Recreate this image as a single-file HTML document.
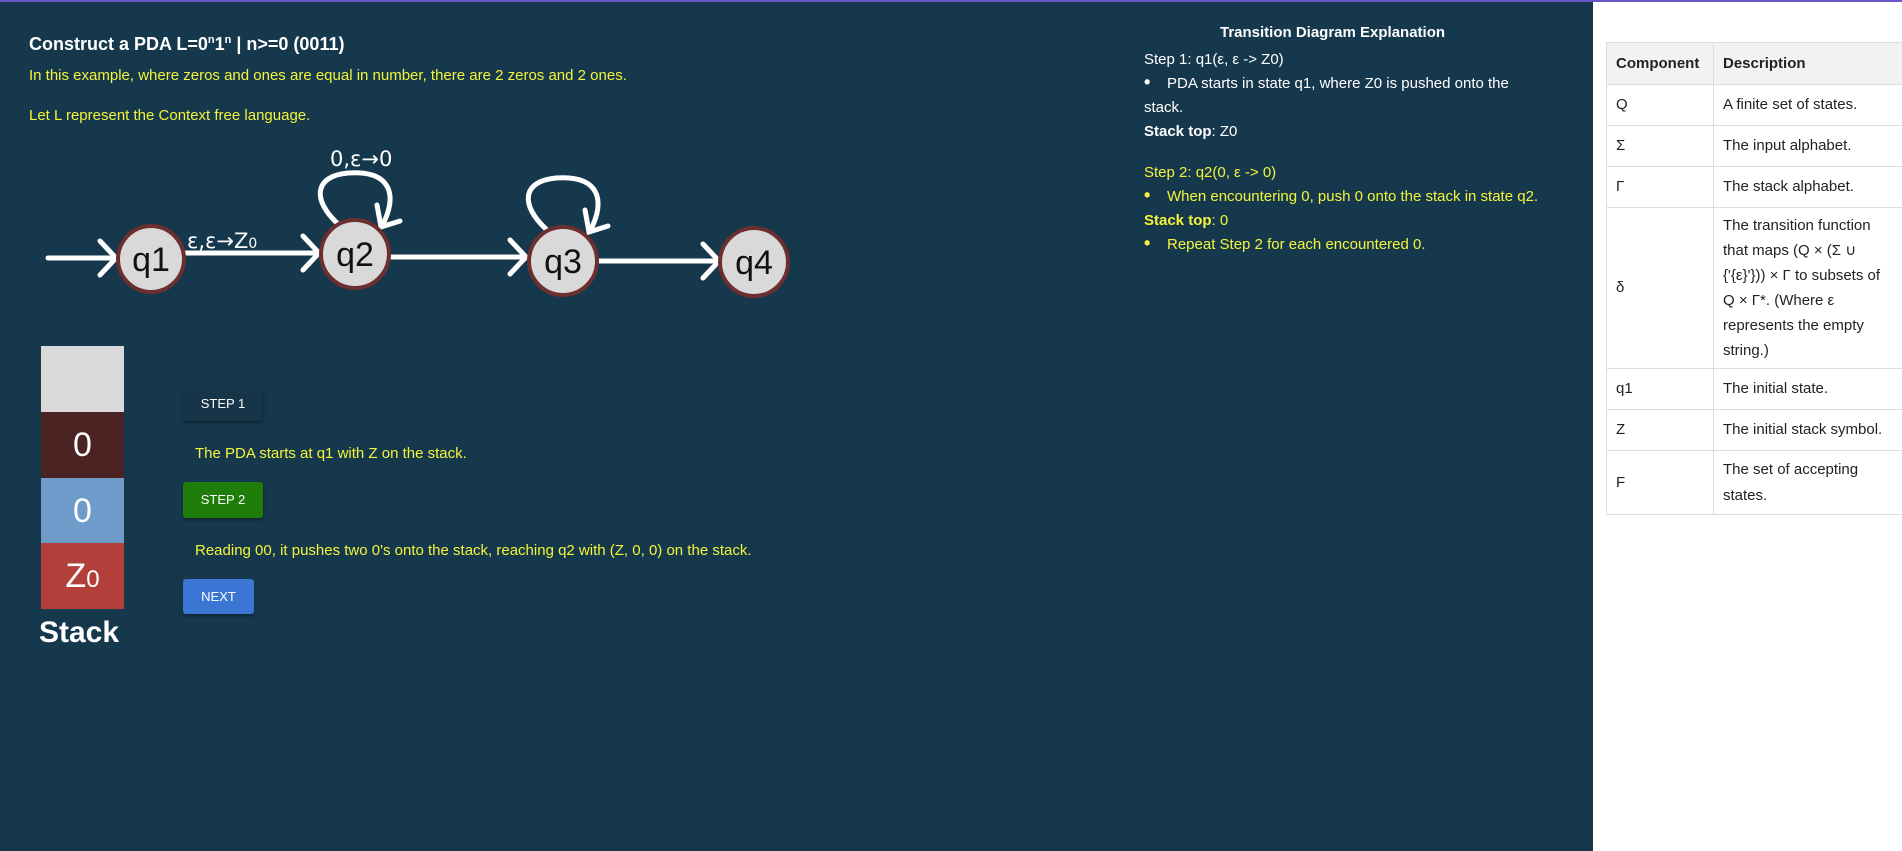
<!DOCTYPE html>
<html><head><meta charset="utf-8"><style>
*{margin:0;padding:0;box-sizing:border-box}
body{width:1902px;height:851px;overflow:hidden;background:#fff;font-family:"Liberation Sans",sans-serif;position:relative}
#dark{position:absolute;left:0;top:0;width:1593px;height:851px;background:#16384c}
#bar{position:absolute;left:0;top:0;width:1902px;height:2px;background:#6a55c8}
.t{position:absolute;white-space:nowrap}
.y{color:#f4f43a}
.w{color:#fff}
.cell{position:absolute;left:41px;width:83px;height:66px;color:#fff;font-size:34px;text-align:center;line-height:66px}
.btn{position:absolute;left:183px;color:#fff;font-size:13px;line-height:34px;text-align:center;border-radius:3px;box-shadow:0 2px 3px rgba(0,0,0,.35)}
table{position:absolute;left:1606px;top:42px;border-collapse:collapse;font-size:15px;color:#222;table-layout:fixed;width:297px}
td,th{border:1px solid #dcdcdc;padding:0 9px;text-align:left;vertical-align:middle;line-height:24px}
td+td{padding-right:18px}
th{background:#f2f2f2;height:42px;font-weight:bold}
td{height:41px}
.b{font-size:18px;display:inline-block;width:23px;font-weight:bold;line-height:10px}
</style></head><body>
<div id="dark"></div><div id="bar"></div>
<div class="t w" style="left:29px;top:34px;font-size:18px;font-weight:bold">Construct a PDA L=0<sup style="font-size:11px">n</sup>1<sup style="font-size:11px">n</sup> | n&gt;=0 (0011)</div>
<div class="t y" style="left:29px;top:67px;font-size:15px">In this example, where zeros and ones are equal in number, there are 2 zeros and 2 ones.</div>
<div class="t y" style="left:29px;top:107px;font-size:15px">Let L represent the Context free language.</div>
<svg style="position:absolute;left:0;top:0" width="900" height="330">
<g fill="none" stroke="#fff" stroke-width="5" stroke-linecap="round">
<line x1="48" y1="258" x2="115" y2="258"/><polyline points="100,241 116,258 100,275"/>
<line x1="185" y1="253" x2="318" y2="253"/><polyline points="303,236 319,253 303,270"/>
<line x1="390" y1="257" x2="525" y2="257"/><polyline points="510,240 526,257 510,274"/>
<line x1="599" y1="261" x2="718" y2="261"/><polyline points="703,244 719,261 703,278"/>
<path d="M338 224 C312 200 314 176 348 173 C392 170 398 196 382 226"/>
<polyline points="377,205 381,227 400,221"/>
<path d="M546 229 C520 205 522 181 556 178 C600 175 606 201 590 231"/>
<polyline points="585,210 589,232 608,226"/>
</g>
<g fill="#d9d9d9" stroke="#6b2f2f" stroke-width="4">
<circle cx="151" cy="259" r="33"/><circle cx="355" cy="254" r="34"/><circle cx="563" cy="261" r="34"/><circle cx="754" cy="262" r="34"/>
</g>
<g font-family="Liberation Sans" font-size="34" fill="#111" text-anchor="middle">
<text x="151" y="271">q1</text><text x="355" y="266">q2</text><text x="563" y="273">q3</text><text x="754" y="274">q4</text>
</g>
<text x="187" y="248" fill="#fff" font-family="DejaVu Sans" font-size="21">ε,ε→Z<tspan font-size="14">0</tspan></text>
<text x="330" y="166" fill="#fff" font-family="DejaVu Sans" font-size="21">0,ε→0</text>
</svg>
<div class="cell" style="top:346px;background:#d9d9d9"></div>
<div class="cell" style="top:412px;background:#4b2322">0</div>
<div class="cell" style="top:478px;background:#6f9bcb">0</div>
<div class="cell" style="top:543px;background:#b33f3b">Z<span style="font-size:24px">0</span></div>
<div class="t w" style="left:39px;top:616px;font-size:30px;font-weight:bold">Stack</div>
<div class="btn" style="top:387px;width:80px;background:#173548">STEP 1</div>
<div class="t y" style="left:195px;top:445px;font-size:15px">The PDA starts at q1 with Z on the stack.</div>
<div class="btn" style="top:482px;width:80px;height:36px;background:#1f7d0a;line-height:36px">STEP 2</div>
<div class="t y" style="left:195px;top:542px;font-size:15px">Reading 00, it pushes two 0's onto the stack, reaching q2 with (Z, 0, 0) on the stack.</div>
<div class="btn" style="top:579px;width:71px;height:35px;background:#3b76d4;line-height:35px">NEXT</div>
<div class="t w" style="left:1220px;top:24px;font-size:15px;font-weight:bold">Transition Diagram Explanation</div>
<div style="position:absolute;left:1144px;top:48px;width:400px;font-size:15px;line-height:24px;color:#fff">
<div>Step 1: q1(ε, ε -&gt; Z0)</div>
<div><span class="b">•</span>PDA starts in state q1, where Z0 is pushed onto the stack.</div>
<div><b>Stack top</b>: Z0</div>
<div class="y" style="margin-top:17px">Step 2: q2(0, ε -&gt; 0)</div>
<div class="y" style="white-space:nowrap"><span class="b">•</span>When encountering 0, push 0 onto the stack in state q2.</div>
<div class="y"><b>Stack top</b>: 0</div>
<div class="y"><span class="b">•</span>Repeat Step 2 for each encountered 0.</div>
</div>
<table>
<colgroup><col style="width:107px"><col style="width:190px"></colgroup>
<tr><th>Component</th><th>Description</th></tr>
<tr><td>Q</td><td>A finite set of states.</td></tr>
<tr><td>Σ</td><td>The input alphabet.</td></tr>
<tr><td>Γ</td><td>The stack alphabet.</td></tr>
<tr><td style="height:161px">δ</td><td style="line-height:25px">The transition function that maps (Q × (Σ ∪ {'{ε}'})) × Γ to subsets of Q × Γ*. (Where ε represents the empty string.)</td></tr>
<tr><td>q1</td><td>The initial state.</td></tr>
<tr><td>Z</td><td>The initial stack symbol.</td></tr>
<tr><td style="height:64px">F</td><td style="line-height:26px">The set of accepting states.</td></tr>
</table>
</body></html>
